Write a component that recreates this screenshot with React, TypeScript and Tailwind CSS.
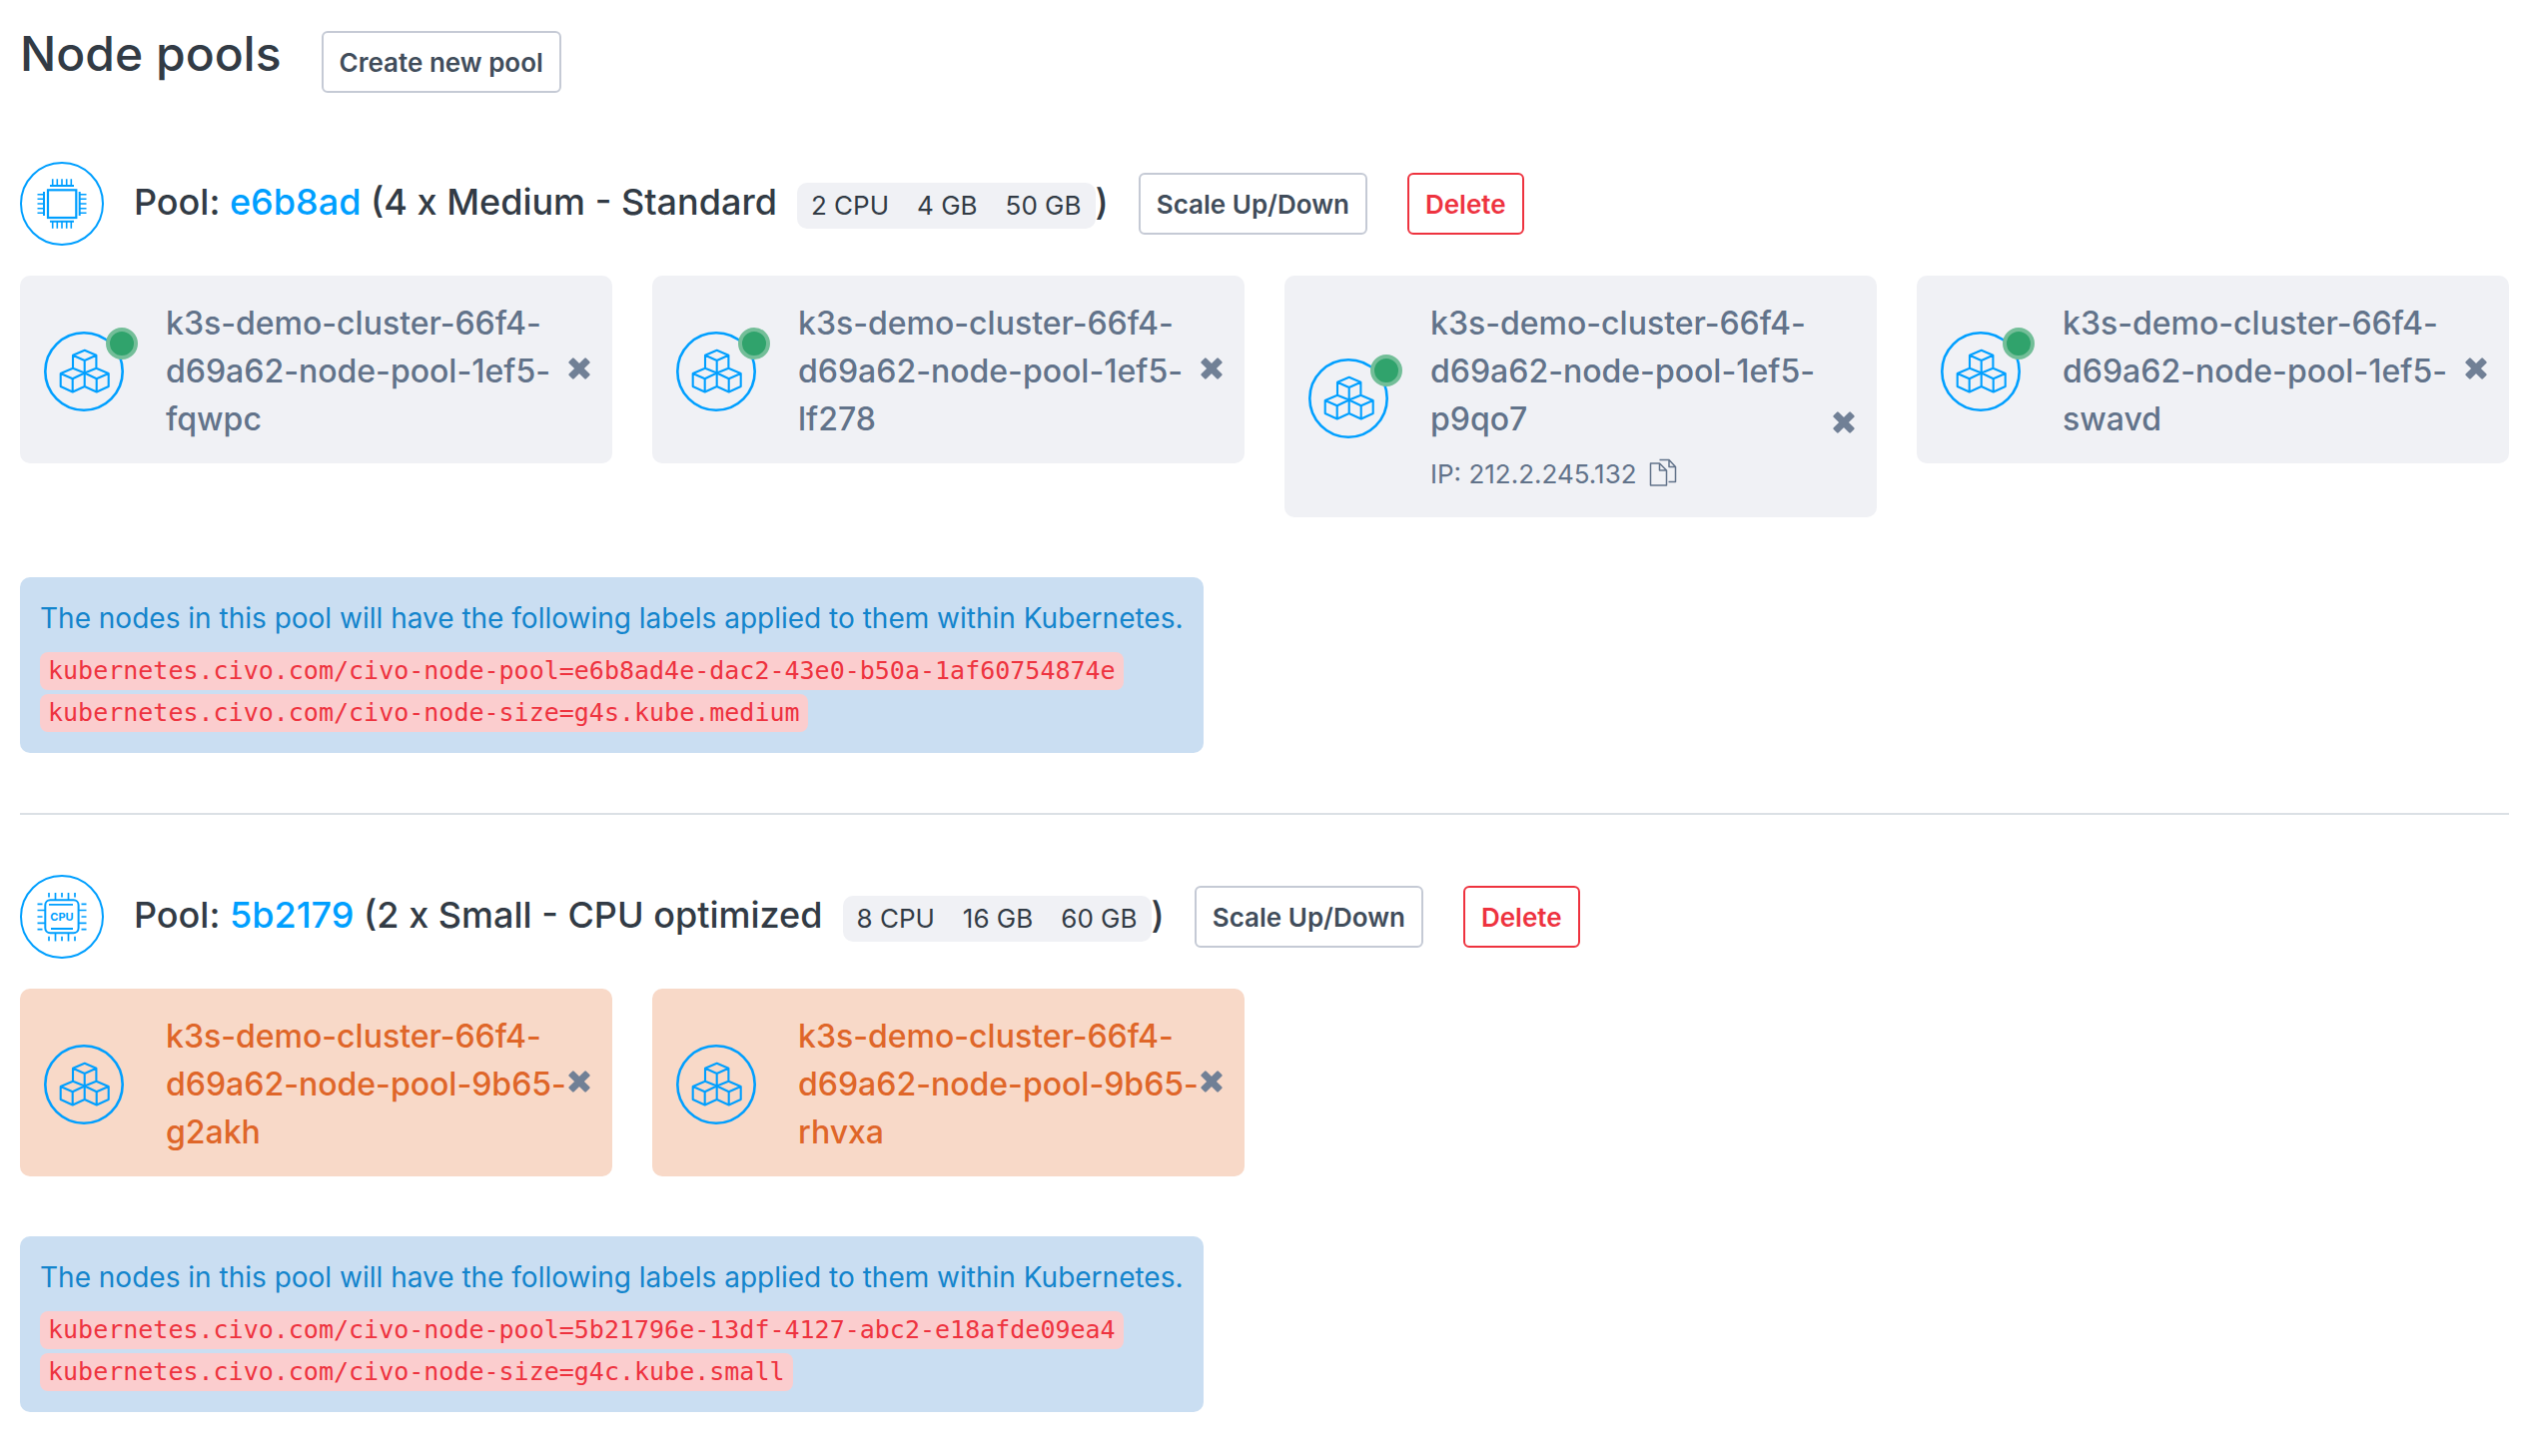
import React from "react";

type PoolNode = { name: string; ip?: string };

function Ring({ children }: { children: React.ReactNode }) {
  return (
    <svg viewBox="0 0 84 84" className="size-full" fill="none" stroke="#009fff" strokeWidth="2" aria-hidden="true">
      <circle cx="42" cy="42" r="41" />
      {children}
    </svg>
  );
}

function ChipIcon() {
  return (
    <Ring>
      <rect x="28" y="28.3" width="28.3" height="27.7" strokeWidth="2.2" />
      <path d="M30 24h24M30 59.7h24M24 30v24M59.7 30v24" />
      <path
        strokeWidth="1.6"
        d="M32.7 17.3v6M37.3 17.3v6M42 17.3v6M46.7 17.3v6M51.3 17.3v6M32.7 60v6.7M37.3 60v6.7M42 60v6.7M46.7 60v6.7M51.3 60v6.7M17.5 32.7h6M17.5 37.3h6M17.5 42h6M17.5 46.700h6M17.5 51.3h6M60 32.7h6.500M60 37.3h6.500M60 42h6.500M60 46.700h6.500M60 51.3h6.500"
      />
    </Ring>
  );
}

function CpuIcon() {
  return (
    <Ring>
      <rect x="25.3" y="25.3" width="33.3" height="33" rx="5" />
      <path strokeWidth="1.8" d="M29 29.9h24M31 54h22" />
      <path
        strokeWidth="1.7"
        d="M29 18v4.500M35.5 18v7M42 18v4.500M48.500 18v7M55 18v4.500M29 61.800v4.500M35.5 59v7.500M42 61.800v4.500M48.500 59v7.500M55 61.800v4.500M17.500 29.300h5M17.500 35.500h7.500M17.500 42h5M17.500 48.300h7.500M17.500 54.700h5M61.500 29.300h5M59 35.500h7.500M61.500 42h5M59 48.300h7.500M61.500 54.700h5"
      />
      <text x="42" y="45.700" textAnchor="middle" fontSize="11" className="font-bold" fill="#009fff" stroke="none">
        CPU
      </text>
    </Ring>
  );
}

function CubesIcon() {
  return (
    <svg viewBox="0 0 80 80" className="size-full" fill="none" stroke="#009fff" strokeWidth="2.1" strokeLinejoin="round" aria-hidden="true">
      <circle cx="40" cy="40" r="38.700" strokeWidth="2.6" />
      <path d="M40.7 18.7l11.700 5v13l12.300 5.300v13l-12 5.500l-12 -5.500l-12 5.500l-12 -5.500v-13l12.300 -5.300v-13zM29 23.7l11.700 5.300l11.700 -5.300M40.700 29v26M29 36.700l11.700 4.800l11.700 -4.800M16.700 42l12 5.300l12 -5.800l12 5.800l12 -5.300M28.700 47.300v13M52.700 47.300v13" />
    </svg>
  );
}

function CloseIcon() {
  return (
    <svg viewBox="0 0 22 22" className="size-[22px]" fill="#718096" stroke="#718096" strokeWidth="2.4" strokeLinejoin="round" aria-hidden="true">
      <path d="M1.6 4.900L4.900 1.600L11 7.700L17.100 1.600L20.400 4.900L14.300 11L20.400 17.100L17.100 20.400L11 14.300L4.900 20.400L1.600 17.100L7.700 11z" />
    </svg>
  );
}

function CopyIcon() {
  return (
    <svg viewBox="0 0 28 28" className="size-7" fill="none" stroke="currentColor" strokeWidth="1.5" strokeLinejoin="round" aria-hidden="true">
      <path d="M1.500 5h9l7 7v15h-16zM10.500 5v7h7" />
      <path d="M10.500 1.500h9.500l6.500 7v15h-7M20 1.500v7h6.500" />
    </svg>
  );
}

function OutlineButton({ danger, children }: { danger?: boolean; children: React.ReactNode }) {
  return (
    <button
      type="button"
      className={
        danger
          ? "h-[62px] shrink-0 rounded-md border-2 border-[#ee333f] bg-white px-4 text-[26px] font-semibold text-[#ee333f]"
          : "h-[62px] shrink-0 rounded-md border-2 border-[#c5cad5] bg-white px-4 text-[26px] font-semibold text-[#414d5b]"
      }
    >
      {children}
    </button>
  );
}

function NodeCard({ node, pending }: { node: PoolNode; pending?: boolean }) {
  return (
    <li
      className={
        pending
          ? "flex items-center rounded-[10px] bg-[#f8d9c8] pt-6 pr-[22px] pb-5 pl-6 text-[#df6629]"
          : "flex items-center rounded-[10px] bg-[#f0f1f5] pt-6 pr-[22px] pb-5 pl-6 text-[#62738a]"
      }
    >
      <div className="relative size-20 shrink-0">
        <CubesIcon />
        {!pending && <span className="absolute -top-1 -right-[14px] size-8 rounded-full border-4 border-[#73be98] bg-[#30a36c]" />}
      </div>
      <div className="ml-[42px] min-w-0 flex-1">
        <p className="text-[32px] leading-[48px] font-medium">{node.name}</p>
        {node.ip && (
          <p className="mt-2 flex items-center gap-3 text-[26px] leading-[46px]">
            IP: {node.ip}
            <button type="button" aria-label="Copy IP address" className="pb-1">
              <CopyIcon />
            </button>
          </p>
        )}
      </div>
      <button type="button" aria-label="Remove node" className="mb-16 -ml-4 shrink-0 self-end">
        <CloseIcon />
      </button>
    </li>
  );
}

type PoolProps = {
  id: string;
  summary: string;
  specs: string[];
  icon: React.ReactNode;
  nodes: PoolNode[];
  labels: string[];
  pending?: boolean;
};

function Pool({ id, summary, specs, icon, nodes, labels, pending }: PoolProps) {
  return (
    <section>
      <div className="flex items-center">
        <div className="size-[84px] shrink-0">{icon}</div>
        <h2 className="ml-[30px] flex items-center pb-1 text-[36px] leading-[54px] font-medium whitespace-pre">
          Pool: <a href="#" className="text-[#009fff]">{id}</a> ({summary}
          <span className="mt-2 ml-5 flex h-[46px] items-center gap-7 rounded-[10px] bg-[#f0f1f5] px-[14px] text-[26px] font-normal">
            {specs.map((s) => (
              <span key={s}>{s}</span>
            ))}
          </span>
          )
        </h2>
        <div className="ml-[30px] flex gap-10">
          <OutlineButton>Scale Up/Down</OutlineButton>
          <OutlineButton danger>Delete</OutlineButton>
        </div>
      </div>
      <ul className="mt-[30px] grid grid-cols-4 items-start gap-10">
        {nodes.map((n) => (
          <NodeCard key={n.name} node={n} pending={pending} />
        ))}
      </ul>
      <div className="mt-[60px] w-fit rounded-[10px] bg-[#cadef2] px-5 pt-5 pb-[21px] text-[28px] leading-[42px] text-[#1384cc]">
        <p>The nodes in this pool will have the following labels applied to them within Kubernetes.</p>
        <ul className="mt-[13px] flex flex-col items-start gap-1">
          {labels.map((l) => (
            <li key={l} className="flex">
              <code className="rounded-lg bg-[#fbcdce] px-2 font-['DejaVu_Sans_Mono',monospace] text-[25px] leading-[38px] text-[#ee333f]">{l}</code>
            </li>
          ))}
        </ul>
      </div>
    </section>
  );
}

export default function App() {
  return (
    <main className="min-h-screen bg-white pt-[31px] pr-[22px] pb-11 pl-5 font-['Inter',sans-serif] text-[#323b45]">
      <header className="flex gap-10">
        <h1 className="text-[48px] leading-[46px] font-medium">Node pools</h1>
        <OutlineButton>Create new pool</OutlineButton>
      </header>
      <div className="mt-[69px]">
        <Pool
          id="e6b8ad"
          summary="4 x Medium - Standard"
          specs={["2 CPU", "4 GB", "50 GB"]}
          icon={<ChipIcon />}
          nodes={[
            { name: "k3s-demo-cluster-66f4-d69a62-node-pool-1ef5-fqwpc" },
            { name: "k3s-demo-cluster-66f4-d69a62-node-pool-1ef5-lf278" },
            { name: "k3s-demo-cluster-66f4-d69a62-node-pool-1ef5-p9qo7", ip: "212.2.245.132" },
            { name: "k3s-demo-cluster-66f4-d69a62-node-pool-1ef5-swavd" },
          ]}
          labels={["kubernetes.civo.com/civo-node-pool=e6b8ad4e-dac2-43e0-b50a-1af60754874e", "kubernetes.civo.com/civo-node-size=g4s.kube.medium"]}
        />
        <hr className="my-[60px] border-t-2 border-[#dbe0e5]" />
        <Pool
          id="5b2179"
          summary="2 x Small - CPU optimized"
          specs={["8 CPU", "16 GB", "60 GB"]}
          icon={<CpuIcon />}
          nodes={[{ name: "k3s-demo-cluster-66f4-d69a62-node-pool-9b65-g2akh" }, { name: "k3s-demo-cluster-66f4-d69a62-node-pool-9b65-rhvxa" }]}
          labels={["kubernetes.civo.com/civo-node-pool=5b21796e-13df-4127-abc2-e18afde09ea4", "kubernetes.civo.com/civo-node-size=g4c.kube.small"]}
          pending
        />
      </div>
    </main>
  );
}
